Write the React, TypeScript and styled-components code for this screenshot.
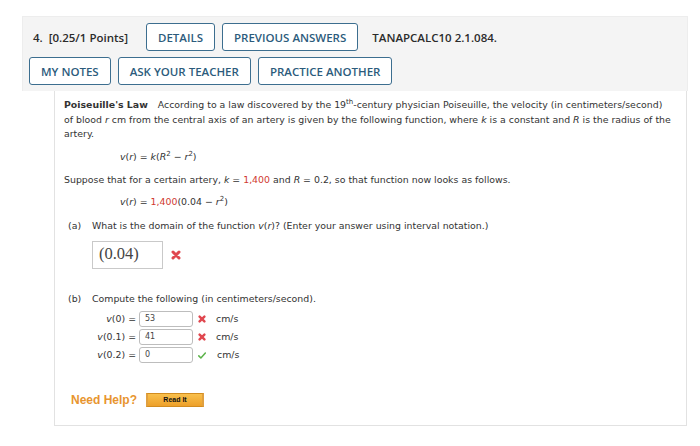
import React from "react";
import styled, { createGlobalStyle } from "styled-components";

const GlobalStyle = createGlobalStyle`
  html, body {
    margin: 0;
    padding: 0;
    background: #ffffff;
  }
`;

const Page = styled.div`
  padding: 16px 12px 0 22px;
  width: 666px;
`;

const Header = styled.div`
  background: #f4f4f4;
  border: 1px solid #ededed;
  border-bottom: none;
  padding: 6px 0 6px 6px;
  display: flex;
  flex-direction: column;
  gap: 6px;
  font-family: "Open Sans", "Noto Sans", sans-serif;
`;

const HeaderRow = styled.div`
  display: flex;
  align-items: center;
  gap: 7px;
`;

const HeaderText = styled.span<{ $before?: number; $after?: number }>`
  font-size: 11.5px;
  font-weight: 600;
  color: #2b2b2b;
  margin-left: ${(p) => p.$before ?? 0}px;
  margin-right: ${(p) => p.$after ?? 0}px;
  white-space: pre;
`;

const OutlineButton = styled.button`
  height: 28px;
  box-sizing: border-box;
  padding: 0 11px;
  background: #ffffff;
  border: 1.5px solid #3c6e8f;
  border-radius: 3px;
  color: #2c5b7c;
  font-family: "Open Sans", "Noto Sans", sans-serif;
  font-size: 11.5px;
  font-weight: 600;
  cursor: pointer;
`;

const Panel = styled.div`
  margin-left: 32px;
  width: 633px;
  box-sizing: border-box;
  border: 1px solid #e2e2e2;
  border-top: none;
  padding: 7px 14px 17px 9px;
  font-family: "DejaVu Sans", Verdana, sans-serif;
  font-size: 9.4px;
  line-height: 14.5px;
  color: #333333;
`;

const Para = styled.p<{ $top?: number }>`
  margin: ${(p) => p.$top ?? 0}px 0 0 0;
`;

const Title = styled.b`
  margin-right: 7px;
`;

const Formula = styled.div<{ $top: number }>`
  margin: ${(p) => p.$top}px 0 0 56px;
  line-height: 14px;
`;

const Sup = styled.sup`
  font-size: 7px;
  line-height: 0;
`;

const Red = styled.span`
  color: #d0392f;
`;

const Part = styled.div<{ $top: number }>`
  margin-top: ${(p) => p.$top}px;
  margin-left: 4px;
  display: grid;
  grid-template-columns: 24px 1fr;
`;

const PartLabel = styled.span``;

const PartBody = styled.div`
  display: flex;
  flex-direction: column;
`;

const BigAnswer = styled.div`
  margin-top: 7px;
  display: flex;
  align-items: center;
  gap: 8px;
`;

const BigBox = styled.div`
  width: 71px;
  height: 28px;
  box-sizing: border-box;
  border: 1px solid #c9c9c9;
  padding-left: 6px;
  display: flex;
  align-items: center;
  font-family: "Liberation Serif", "Times New Roman", serif;
  font-size: 16.5px;
  color: #444;
`;

const Rows = styled.div`
  margin-top: 5px;
  display: flex;
  flex-direction: column;
  gap: 2px;
`;

const Row = styled.div`
  display: grid;
  grid-template-columns: 44px 54px 10px auto;
  column-gap: 3px;
  align-items: center;
  height: 16px;
`;

const RowLabel = styled.span`
  text-align: right;
  white-space: nowrap;
`;

const SmallBox = styled.div`
  height: 16px;
  box-sizing: border-box;
  border: 1px solid #bdbdbd;
  border-radius: 3px;
  padding-left: 5px;
  font-size: 8px;
  line-height: 14px;
  color: #444;
`;

const Unit = styled.span<{ $shift: number }>`
  margin-left: ${(p) => p.$shift}px;
`;

const MarkWrap = styled.span<{ $left?: number }>`
  display: inline-flex;
  margin-left: ${(p) => p.$left ?? 0}px;
`;

const Help = styled.div`
  margin: 30px 0 0 7px;
  display: flex;
  align-items: center;
  gap: 9px;
`;

const HelpText = styled.span`
  font-family: "Liberation Sans", Arial, sans-serif;
  font-size: 12px;
  font-weight: bold;
  color: #e8952f;
`;

const ReadIt = styled.button`
  width: 58px;
  height: 14px;
  padding: 0;
  box-sizing: border-box;
  border: 1px solid #d28c1f;
  border-left: 2px solid #e0a040;
  border-right: 2px solid #e0a040;
  background: linear-gradient(#f9c04c, #eda02a);
  font-family: "Liberation Sans", Arial, sans-serif;
  font-size: 7px;
  font-weight: bold;
  color: #111;
  line-height: 12px;
`;

const Cross = ({ size = 10 }: { size?: number }) => (
  <svg width={size} height={size} viewBox="0 0 10 10">
    <path
      d="M2 2 L8 8 M8 2 L2 8"
      stroke="#e0474f"
      strokeWidth="3"
      strokeLinecap="round"
    />
  </svg>
);

const Check = () => (
  <svg width="10" height="9" viewBox="0 0 10 9">
    <path
      d="M1 5 L3.6 7.6 L9.2 1.4"
      stroke="#5cb34a"
      strokeWidth="1.9"
      fill="none"
      strokeLinecap="round"
      strokeLinejoin="round"
    />
  </svg>
);

const V = ({ arg }: { arg: React.ReactNode }) => (
  <>
    <i>v</i>({arg})
  </>
);

const rows = [
  { arg: "0", value: "53", ok: false },
  { arg: "0.1", value: "41", ok: false },
  { arg: "0.2", value: "0", ok: true },
];

export default function App() {
  return (
    <>
      <GlobalStyle />
      <Page>
        <Header>
          <HeaderRow>
            <HeaderText $before={4} $after={11}>
              4.  [0.25/1 Points]
            </HeaderText>
            <OutlineButton>DETAILS</OutlineButton>
            <OutlineButton>PREVIOUS ANSWERS</OutlineButton>
            <HeaderText $before={7}>TANAPCALC10 2.1.084.</HeaderText>
          </HeaderRow>
          <HeaderRow>
            <OutlineButton>MY NOTES</OutlineButton>
            <OutlineButton>ASK YOUR TEACHER</OutlineButton>
            <OutlineButton>PRACTICE ANOTHER</OutlineButton>
          </HeaderRow>
        </Header>
        <Panel>
          <Para>
            <Title>Poiseuille's Law</Title> According to a law discovered by
            the 19<Sup>th</Sup>-century physician Poiseuille, the velocity (in
            centimeters/second) of blood <i>r</i> cm from the central axis of an
            artery is given by the following function, where <i>k</i> is a
            constant and <i>R</i> is the radius of the artery.
          </Para>
          <Formula $top={8}>
            <V arg={<i>r</i>} /> = <i>k</i>(<i>R</i>
            <Sup>2</Sup> − <i>r</i>
            <Sup>2</Sup>)
          </Formula>
          <Para $top={9}>
            Suppose that for a certain artery, <i>k</i> = <Red>1,400</Red> and{" "}
            <i>R</i> = 0.2, so that function now looks as follows.
          </Para>
          <Formula $top={8}>
            <V arg={<i>r</i>} /> = <Red>1,400</Red>(0.04 − <i>r</i>
            <Sup>2</Sup>)
          </Formula>
          <Part $top={10}>
            <PartLabel>(a)</PartLabel>
            <PartBody>
              <span>
                What is the domain of the function <V arg={<i>r</i>} />? (Enter
                your answer using interval notation.)
              </span>
              <BigAnswer>
                <BigBox>(0.04)</BigBox>
                <Cross />
              </BigAnswer>
            </PartBody>
          </Part>
          <Part $top={23}>
            <PartLabel>(b)</PartLabel>
            <PartBody>
              <span>Compute the following (in centimeters/second).</span>
              <Rows>
                {rows.map((r) => (
                  <Row key={r.arg}>
                    <RowLabel>
                      <V arg={r.arg} /> =
                    </RowLabel>
                    <SmallBox>{r.value}</SmallBox>
                    <MarkWrap $left={2}>{r.ok ? <Check /> : <Cross />}</MarkWrap>
                    <Unit $shift={r.ok ? 8 : 7}>cm/s</Unit>
                  </Row>
                ))}
              </Rows>
            </PartBody>
          </Part>
          <Help>
            <HelpText>Need Help?</HelpText>
            <ReadIt>Read It</ReadIt>
          </Help>
        </Panel>
      </Page>
    </>
  );
}
